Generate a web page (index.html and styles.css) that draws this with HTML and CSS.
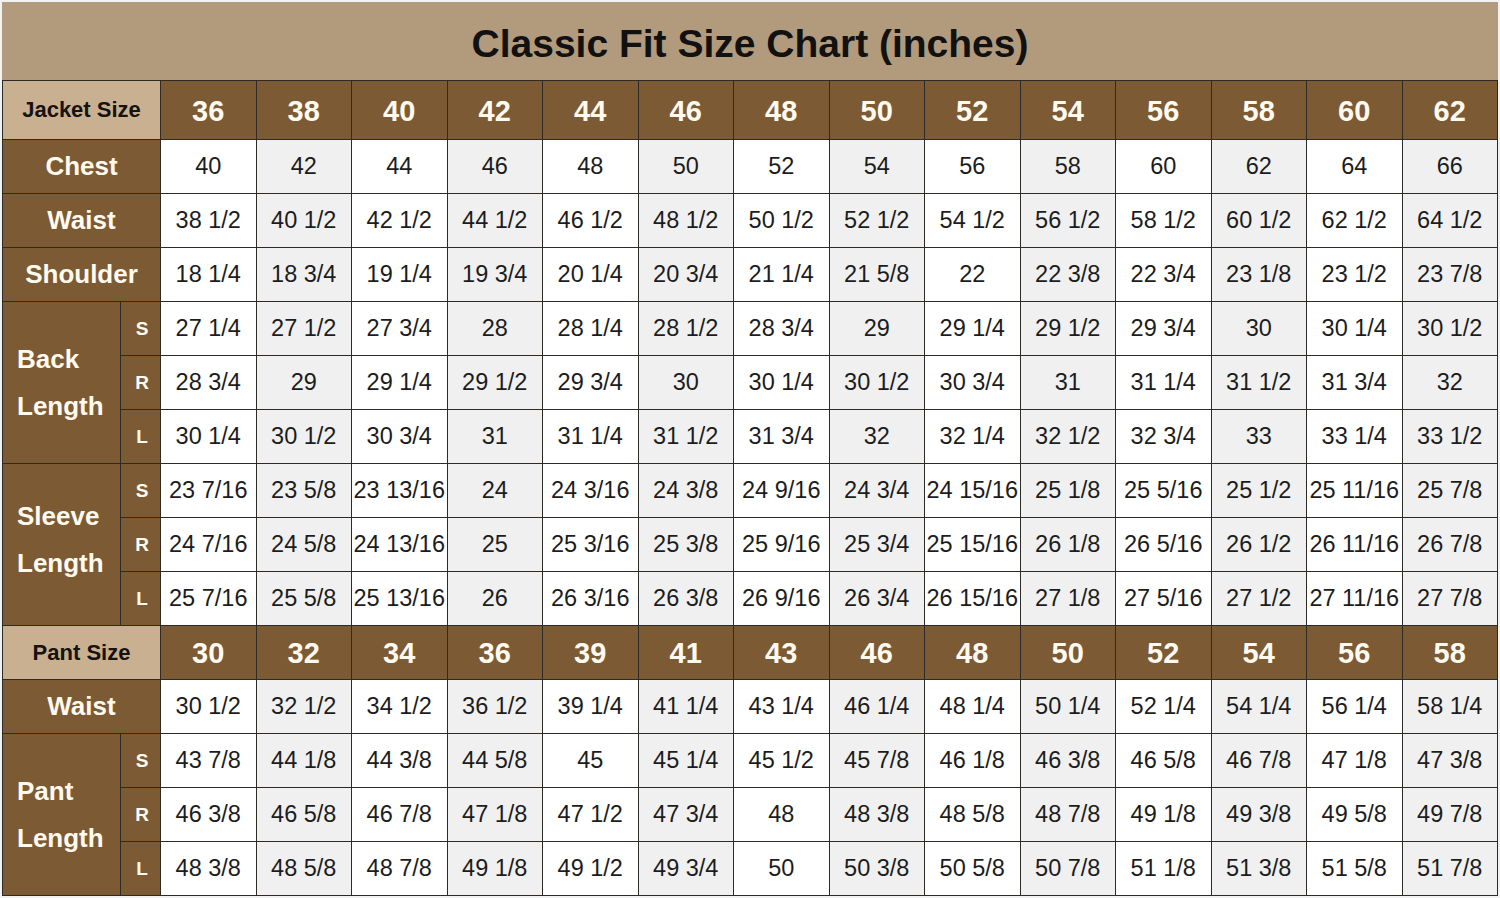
FILE: index.html
```html
<!DOCTYPE html>
<html>
<head>
<meta charset="utf-8">
<link rel="stylesheet" href="styles.css">
</head>
<body>
<div class="page">
  <div class="title">Classic Fit Size Chart (inches)</div>
  <div class="chart">
    <div class="hlabel span2">Jacket Size</div>
    <div class="num">36</div><div class="num">38</div><div class="num">40</div><div class="num">42</div><div class="num">44</div><div class="num">46</div><div class="num">48</div><div class="num">50</div><div class="num">52</div><div class="num">54</div><div class="num">56</div><div class="num">58</div><div class="num">60</div><div class="num">62</div>

    <div class="label span2">Chest</div>
    <div class="d">40</div><div class="d g">42</div><div class="d">44</div><div class="d g">46</div><div class="d">48</div><div class="d g">50</div><div class="d">52</div><div class="d g">54</div><div class="d">56</div><div class="d g">58</div><div class="d">60</div><div class="d g">62</div><div class="d">64</div><div class="d g">66</div>

    <div class="label span2">Waist</div>
    <div class="d">38 1/2</div><div class="d g">40 1/2</div><div class="d">42 1/2</div><div class="d g">44 1/2</div><div class="d">46 1/2</div><div class="d g">48 1/2</div><div class="d">50 1/2</div><div class="d g">52 1/2</div><div class="d">54 1/2</div><div class="d g">56 1/2</div><div class="d">58 1/2</div><div class="d g">60 1/2</div><div class="d">62 1/2</div><div class="d g">64 1/2</div>

    <div class="label span2">Shoulder</div>
    <div class="d">18 1/4</div><div class="d g">18 3/4</div><div class="d">19 1/4</div><div class="d g">19 3/4</div><div class="d">20 1/4</div><div class="d g">20 3/4</div><div class="d">21 1/4</div><div class="d g">21 5/8</div><div class="d">22</div><div class="d g">22 3/8</div><div class="d">22 3/4</div><div class="d g">23 1/8</div><div class="d">23 1/2</div><div class="d g">23 7/8</div>

    <div class="group">Back<br>Length</div>
    <div class="sub">S</div>
    <div class="d">27 1/4</div><div class="d g">27 1/2</div><div class="d">27 3/4</div><div class="d g">28</div><div class="d">28 1/4</div><div class="d g">28 1/2</div><div class="d">28 3/4</div><div class="d g">29</div><div class="d">29 1/4</div><div class="d g">29 1/2</div><div class="d">29 3/4</div><div class="d g">30</div><div class="d">30 1/4</div><div class="d g">30 1/2</div>
    <div class="sub">R</div>
    <div class="d">28 3/4</div><div class="d g">29</div><div class="d">29 1/4</div><div class="d g">29 1/2</div><div class="d">29 3/4</div><div class="d g">30</div><div class="d">30 1/4</div><div class="d g">30 1/2</div><div class="d">30 3/4</div><div class="d g">31</div><div class="d">31 1/4</div><div class="d g">31 1/2</div><div class="d">31 3/4</div><div class="d g">32</div>
    <div class="sub">L</div>
    <div class="d">30 1/4</div><div class="d g">30 1/2</div><div class="d">30 3/4</div><div class="d g">31</div><div class="d">31 1/4</div><div class="d g">31 1/2</div><div class="d">31 3/4</div><div class="d g">32</div><div class="d">32 1/4</div><div class="d g">32 1/2</div><div class="d">32 3/4</div><div class="d g">33</div><div class="d">33 1/4</div><div class="d g">33 1/2</div>

    <div class="group sleeve">Sleeve<br>Length</div>
    <div class="sub">S</div>
    <div class="d">23 7/16</div><div class="d g">23 5/8</div><div class="d">23 13/16</div><div class="d g">24</div><div class="d">24 3/16</div><div class="d g">24 3/8</div><div class="d">24 9/16</div><div class="d g">24 3/4</div><div class="d">24 15/16</div><div class="d g">25 1/8</div><div class="d">25 5/16</div><div class="d g">25 1/2</div><div class="d">25 11/16</div><div class="d g">25 7/8</div>
    <div class="sub">R</div>
    <div class="d">24 7/16</div><div class="d g">24 5/8</div><div class="d">24 13/16</div><div class="d g">25</div><div class="d">25 3/16</div><div class="d g">25 3/8</div><div class="d">25 9/16</div><div class="d g">25 3/4</div><div class="d">25 15/16</div><div class="d g">26 1/8</div><div class="d">26 5/16</div><div class="d g">26 1/2</div><div class="d">26 11/16</div><div class="d g">26 7/8</div>
    <div class="sub">L</div>
    <div class="d">25 7/16</div><div class="d g">25 5/8</div><div class="d">25 13/16</div><div class="d g">26</div><div class="d">26 3/16</div><div class="d g">26 3/8</div><div class="d">26 9/16</div><div class="d g">26 3/4</div><div class="d">26 15/16</div><div class="d g">27 1/8</div><div class="d">27 5/16</div><div class="d g">27 1/2</div><div class="d">27 11/16</div><div class="d g">27 7/8</div>

    <div class="hlabel span2">Pant Size</div>
    <div class="num">30</div><div class="num">32</div><div class="num">34</div><div class="num">36</div><div class="num">39</div><div class="num">41</div><div class="num">43</div><div class="num">46</div><div class="num">48</div><div class="num">50</div><div class="num">52</div><div class="num">54</div><div class="num">56</div><div class="num">58</div>

    <div class="label span2">Waist</div>
    <div class="d">30 1/2</div><div class="d g">32 1/2</div><div class="d">34 1/2</div><div class="d g">36 1/2</div><div class="d">39 1/4</div><div class="d g">41 1/4</div><div class="d">43 1/4</div><div class="d g">46 1/4</div><div class="d">48 1/4</div><div class="d g">50 1/4</div><div class="d">52 1/4</div><div class="d g">54 1/4</div><div class="d">56 1/4</div><div class="d g">58 1/4</div>

    <div class="group">Pant<br>Length</div>
    <div class="sub">S</div>
    <div class="d">43 7/8</div><div class="d g">44 1/8</div><div class="d">44 3/8</div><div class="d g">44 5/8</div><div class="d">45</div><div class="d g">45 1/4</div><div class="d">45 1/2</div><div class="d g">45 7/8</div><div class="d">46 1/8</div><div class="d g">46 3/8</div><div class="d">46 5/8</div><div class="d g">46 7/8</div><div class="d">47 1/8</div><div class="d g">47 3/8</div>
    <div class="sub">R</div>
    <div class="d">46 3/8</div><div class="d g">46 5/8</div><div class="d">46 7/8</div><div class="d g">47 1/8</div><div class="d">47 1/2</div><div class="d g">47 3/4</div><div class="d">48</div><div class="d g">48 3/8</div><div class="d">48 5/8</div><div class="d g">48 7/8</div><div class="d">49 1/8</div><div class="d g">49 3/8</div><div class="d">49 5/8</div><div class="d g">49 7/8</div>
    <div class="sub">L</div>
    <div class="d">48 3/8</div><div class="d g">48 5/8</div><div class="d">48 7/8</div><div class="d g">49 1/8</div><div class="d">49 1/2</div><div class="d g">49 3/4</div><div class="d">50</div><div class="d g">50 3/8</div><div class="d">50 5/8</div><div class="d g">50 7/8</div><div class="d">51 1/8</div><div class="d g">51 3/8</div><div class="d">51 5/8</div><div class="d g">51 7/8</div>
  </div>
</div>
</body>
</html>
```

FILE: styles.css
```css
html, body {
  margin: 0;
  padding: 0;
  background: #f2f2f2;
}
body {
  font-family: "Liberation Sans", Arial, sans-serif;
}
.page {
  padding: 2px 0 0 2px;
  width: 1496px;
}
.title {
  height: 78px;
  background: #b29a7d;
  display: flex;
  align-items: center;
  justify-content: center;
  font-weight: bold;
  font-size: 39px;
  color: #111;
  padding-top: 6px;
  box-sizing: border-box;
}
.chart {
  display: grid;
  grid-template-columns: 117px 39px repeat(14, 1fr);
  grid-template-rows: 58px repeat(14, 53px);
  gap: 1px;
  padding: 1px;
  background: #2e2a26;
  width: 1496px;
  box-sizing: border-box;
}
.chart > div {
  display: flex;
  align-items: center;
  justify-content: center;
  white-space: nowrap;
}
.span2 {
  grid-column: span 2;
}
.hlabel {
  background: #c9b090;
  color: #161210;
  font-weight: bold;
  font-size: 22px;
}
.num {
  background: #7c5b34;
  color: #fffaf0;
  font-weight: bold;
  font-size: 29px;
  padding-top: 2px;
}
.label {
  background: #7c5b34;
  color: #fffaf0;
  font-weight: bold;
  font-size: 26px;
}
.chart > .group {
  grid-row: span 3;
  background: #7c5b34;
  color: #fffaf0;
  font-weight: bold;
  font-size: 26px;
  line-height: 47px;
  justify-content: flex-start;
  padding-left: 14px;
}
.chart > .group.sleeve {
  padding-bottom: 9px;
}
.sub {
  background: #7c5b34;
  color: #fffaf0;
  font-weight: bold;
  font-size: 19px;
  padding-left: 3px;
}
.d {
  background: #ffffff;
  color: #1c1c1c;
  font-size: 23.5px;
}
.d.g {
  background: #f0f0f0;
}
```
